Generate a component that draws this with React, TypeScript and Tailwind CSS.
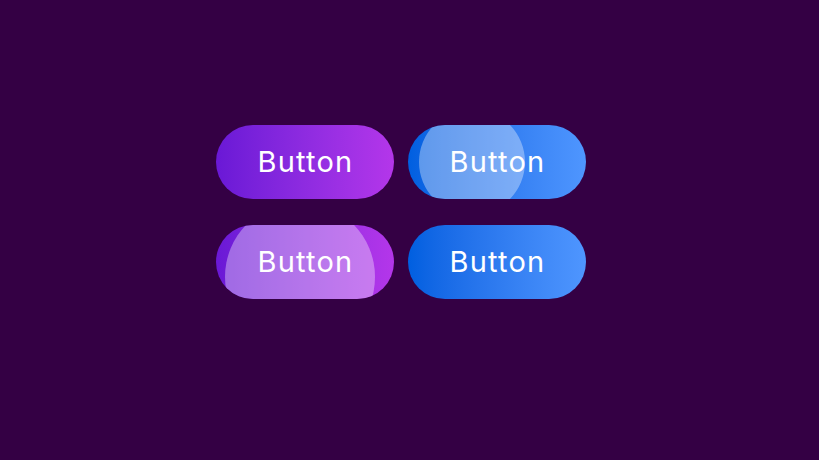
import React from 'react';

type Ripple = { x: number; y: number; r: number };

interface GlowButtonProps {
  gradient: string;
  ripple?: Ripple;
}

// Pill button with an optional light "ripple" circle frozen mid-animation
const GlowButton: React.FC<GlowButtonProps> = ({ gradient, ripple }) => (
  <button
    type="button"
    className={`relative h-[74px] w-[178px] overflow-hidden rounded-full text-white ${gradient}`}
  >
    {ripple && (
      <span
        className="absolute rounded-full bg-white/35"
        style={{
          left: ripple.x - ripple.r,
          top: ripple.y - ripple.r,
          width: ripple.r * 2,
          height: ripple.r * 2,
        }}
      />
    )}
    <span className="relative pl-[1px] text-[29px] font-normal tracking-[1.2px]">Button</span>
  </button>
);

export default function App() {
  const purple = 'bg-gradient-to-r from-[#6a18d6] to-[#b436ea]';
  const blue = 'bg-gradient-to-r from-[#005fe0] to-[#4f96ff]';

  return (
    <div
      className="min-h-screen bg-[#340044] pl-[216px] pt-[125px]"
      style={{ fontFamily: 'Inter, "Noto Sans", sans-serif' }}
    >
      <div className="grid w-max grid-cols-[178px_178px] gap-x-[14px] gap-y-[26px]">
        <GlowButton gradient={purple} />
        <GlowButton gradient={blue} ripple={{ x: 64, y: 37, r: 53 }} />
        <GlowButton gradient={purple} ripple={{ x: 84, y: 52, r: 75 }} />
        <GlowButton gradient={blue} />
      </div>
    </div>
  );
}
